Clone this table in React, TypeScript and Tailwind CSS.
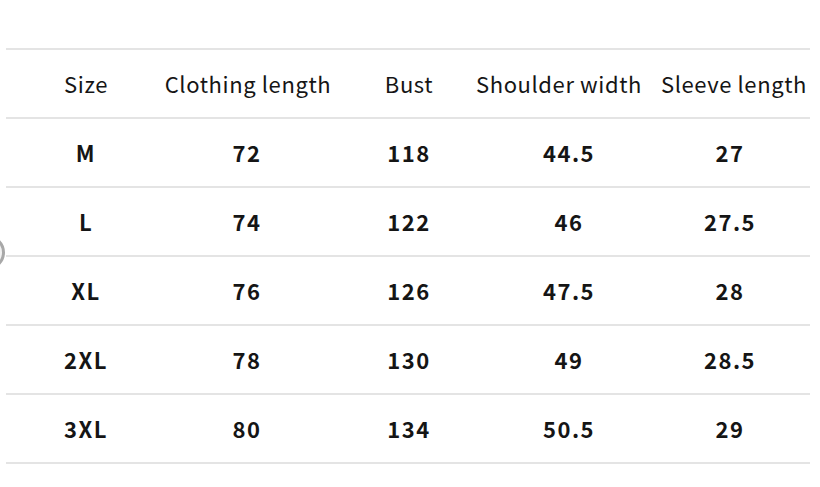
const columns = [
  { label: "Size", width: "w-[160px]", head: "", cell: "" },
  { label: "Clothing length", width: "w-[164px]", head: "", cell: "pr-[2px]" },
  { label: "Bust", width: "w-[158px]", head: "", cell: "" },
  { label: "Shoulder width", width: "w-[152px]", head: "pr-[10px]", cell: "pl-[10px]" },
  { label: "Sleeve length", width: "w-[170px]", head: "pl-[18px]", cell: "pl-[10px]" },
];

const rows = [
  ["M", "72", "118", "44.5", "27"],
  ["L", "74", "122", "46", "27.5"],
  ["XL", "76", "126", "47.5", "28"],
  ["2XL", "78", "130", "49", "28.5"],
  ["3XL", "80", "134", "50.5", "29"],
];

export default function App() {
  return (
    <div className="relative w-[820px] h-[487px] bg-white overflow-hidden text-[#151515] font-['Noto_Sans_CJK_SC','Noto_Sans',sans-serif]">
      {/* page indicator peeking in from the left */}
      <div className="absolute left-[-30px] top-[235px] w-[35px] h-[35px] rounded-full bg-[#f1f1f1] border-[3px] border-[#a8a8a8]"></div>

      <div className="pt-[48px] pl-[6px] w-[810px]">
        <div className="flex h-[69px] border-t-2 border-[#e4e4e4] items-center text-[22px] tracking-[0.6px]">
          {columns.map((col) => (
            <div key={col.label} className={`${col.width} ${col.head} flex justify-center shrink-0 whitespace-nowrap`}>
              {col.label}
            </div>
          ))}
        </div>
        {rows.map((row) => (
          <div key={row[0]} className="flex h-[69px] border-t-2 border-[#e4e4e4] items-center text-[22px] font-bold tracking-[1.5px]">
            {row.map((v, i) => (
              <div key={i} className={`${columns[i].width} ${columns[i].cell} flex justify-center shrink-0`}>
                {v}
              </div>
            ))}
          </div>
        ))}
        <div className="border-t-2 border-[#e4e4e4]"></div>
      </div>
    </div>
  );
}
